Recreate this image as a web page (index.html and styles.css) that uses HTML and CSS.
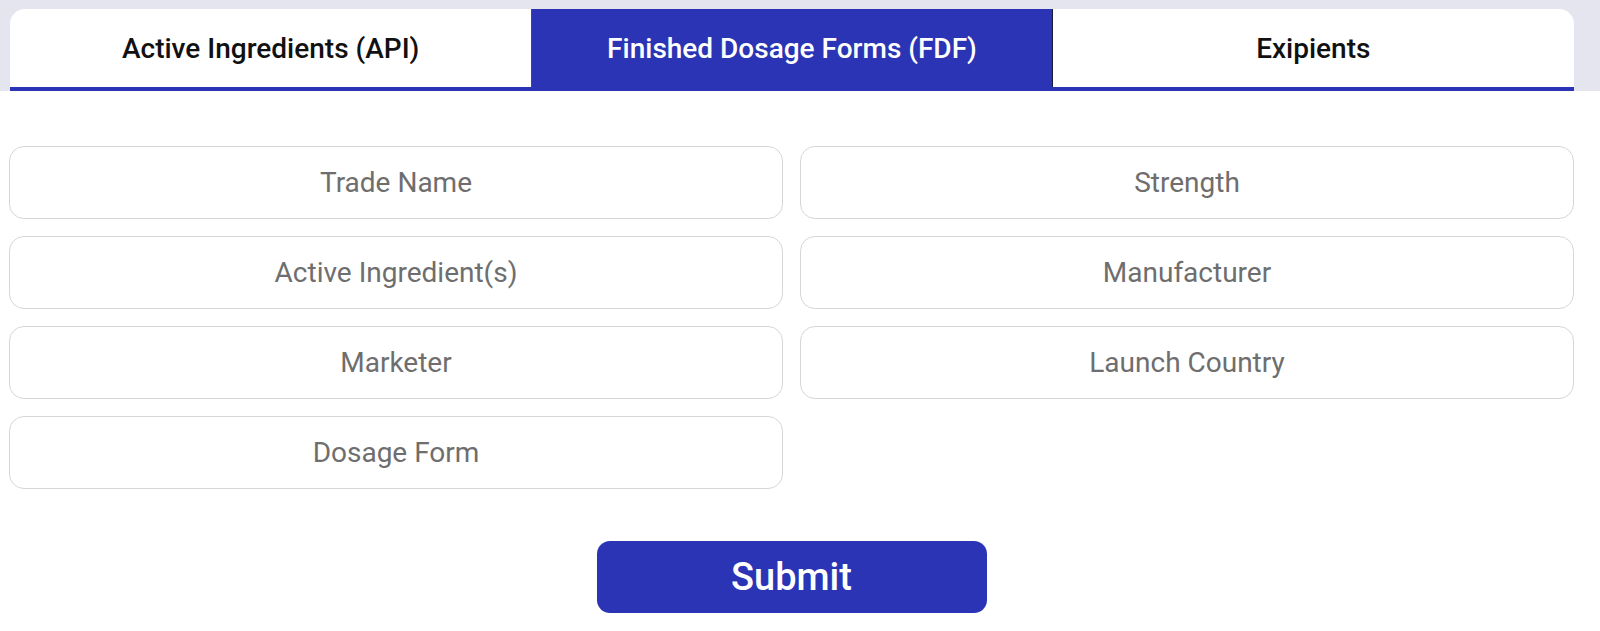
FILE: index.html
```html
<!DOCTYPE html>
<html lang="en">
<head>
<meta charset="utf-8">
<title>Product Search</title>
<link rel="stylesheet" href="styles.css">
</head>
<body>
<header class="tabs-wrap">
  <nav class="tabs">
    <button class="tab" type="button">Active Ingredients (API)</button>
    <button class="tab tab-active" type="button">Finished Dosage Forms (FDF)</button>
    <button class="tab" type="button">Exipients</button>
  </nav>
</header>
<form class="search-form">
  <div class="fields">
    <input class="field" type="text" placeholder="Trade Name">
    <input class="field" type="text" placeholder="Strength">
    <input class="field" type="text" placeholder="Active Ingredient(s)">
    <input class="field" type="text" placeholder="Manufacturer">
    <input class="field" type="text" placeholder="Marketer">
    <input class="field" type="text" placeholder="Launch Country">
    <input class="field" type="text" placeholder="Dosage Form">
  </div>
  <div class="actions">
    <button class="submit" type="submit">Submit</button>
  </div>
</form>
</body>
</html>
```
FILE: styles.css
```css
* {
  box-sizing: border-box;
}

html, body {
  margin: 0;
  padding: 0;
  background: #ffffff;
  font-family: Roboto, "Liberation Sans", sans-serif;
}

.tabs-wrap {
  background: #e5e5f0;
  padding: 9px 26px 0 10px;
}

.tabs {
  display: grid;
  grid-template-columns: 1fr 1fr 1fr;
  background: #ffffff;
  border-radius: 15px 15px 0 0;
  border-bottom: 4px solid #2a34b4;
  overflow: hidden;
}

.tab {
  height: 78px;
  margin: 0;
  border: 0;
  background: transparent;
  font-family: inherit;
  font-size: 28px;
  font-weight: 500;
  color: #111111;
  cursor: pointer;
  padding: 0;
}

.tab-active {
  background: #2a34b4;
  color: #ffffff;
  border-left: 1px solid #4a4a5a;
  border-right: 1px solid #1a1a3a;
}

.search-form {
  padding: 55px 26px 18px 9px;
}

.fields {
  display: grid;
  grid-template-columns: 1fr 1fr;
  column-gap: 17px;
  row-gap: 17px;
}

.field {
  height: 73px;
  width: 100%;
  border: 1px solid #d6d6d6;
  border-radius: 15px;
  background: #ffffff;
  font-family: inherit;
  font-size: 28px;
  color: #333333;
  text-align: center;
  outline: none;
  padding: 0 16px;
}

.field::placeholder {
  color: #6e6e6e;
  opacity: 1;
}

.actions {
  display: flex;
  justify-content: center;
  padding-top: 52px;
}

.submit {
  width: 390px;
  height: 72px;
  border: 0;
  border-radius: 13px;
  background: #2a34b4;
  color: #ffffff;
  font-family: inherit;
  font-size: 38px;
  font-weight: 500;
  cursor: pointer;
}
```
